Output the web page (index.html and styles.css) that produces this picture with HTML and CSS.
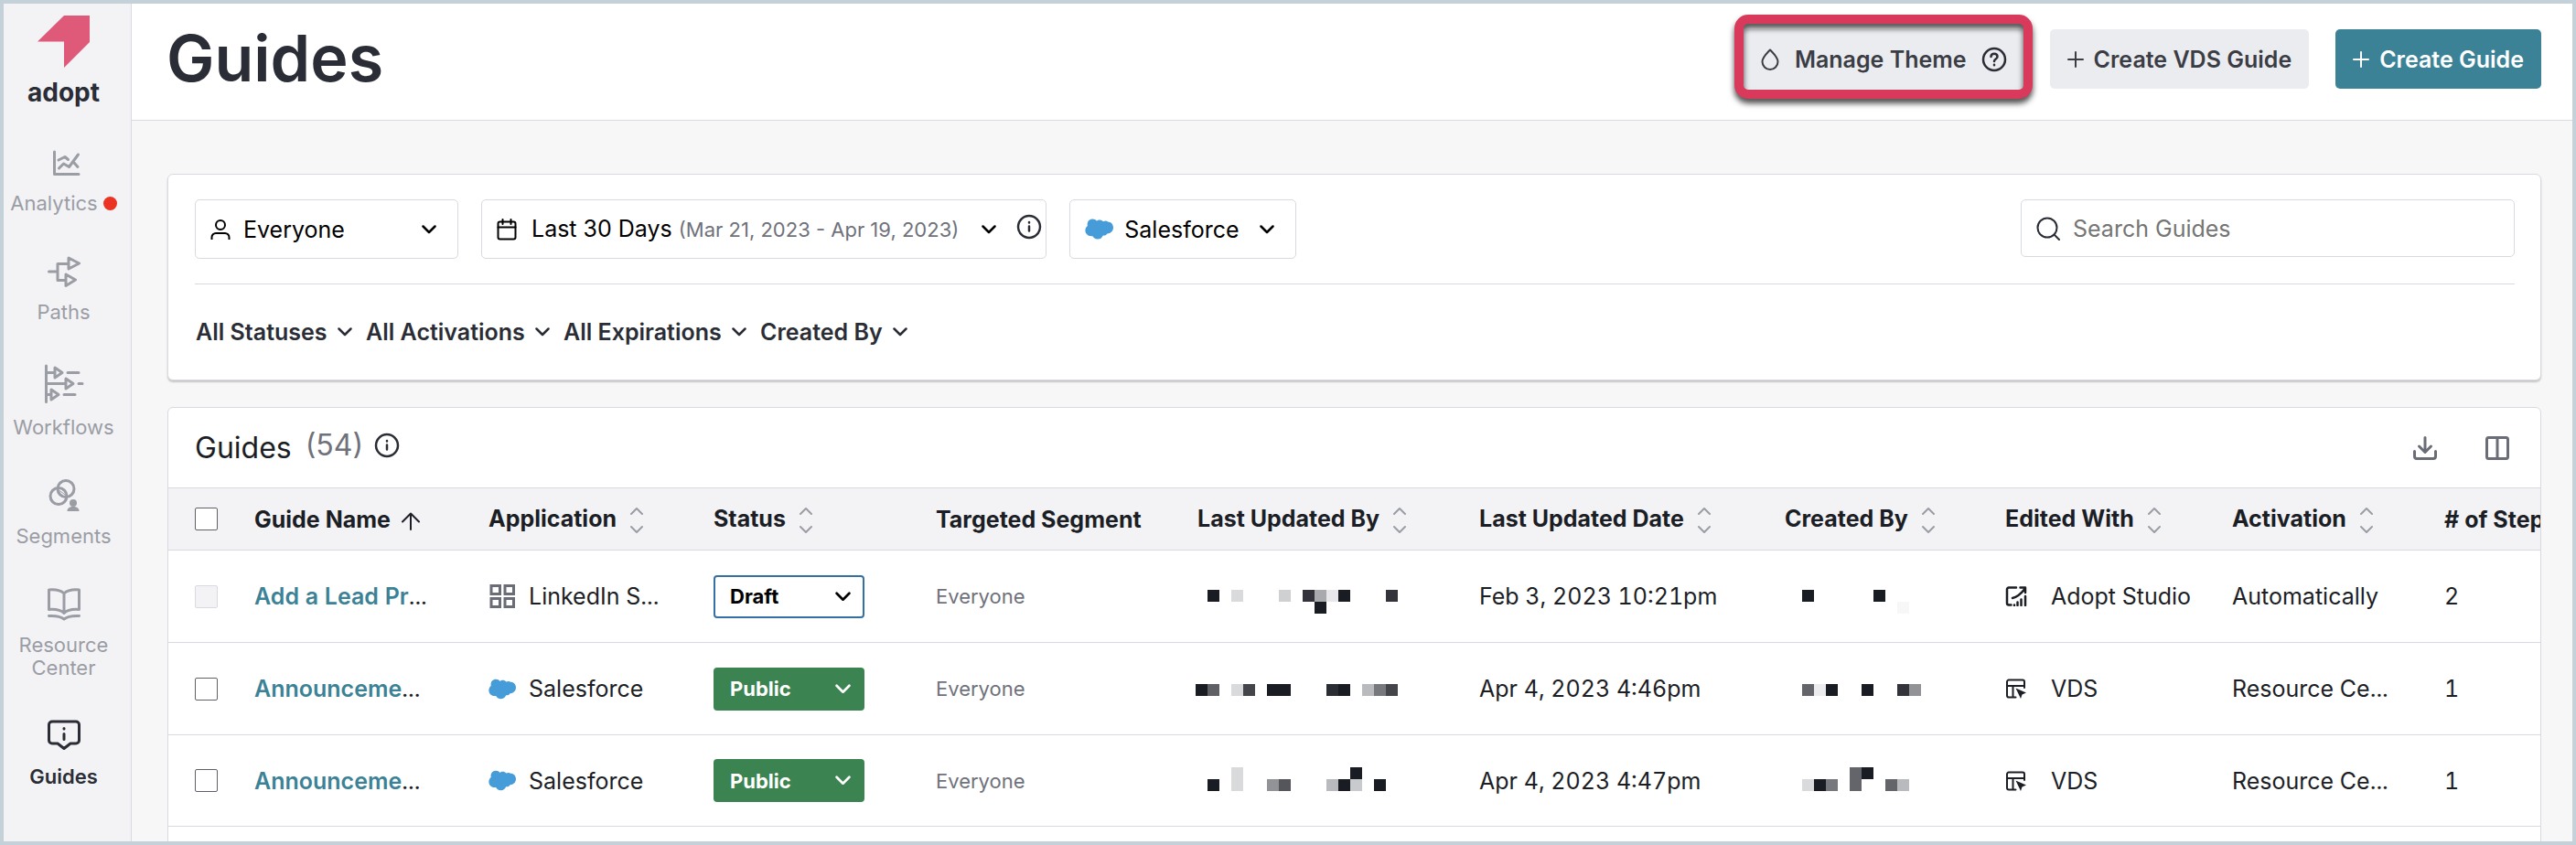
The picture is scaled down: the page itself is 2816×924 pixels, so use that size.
FILE: index.html
```html
<!DOCTYPE html>
<html lang="en">
<head>
    <meta charset="UTF-8">
    <meta name="viewport" content="width=device-width, initial-scale=1.0">
    <title>Guides</title>
    <link rel="stylesheet" href="styles.css">
</head>
<body>
    <!-- Shared icons -->
    <svg class="sprite" aria-hidden="true">
        <symbol id="chevron" viewBox="0 0 16 10"><path stroke-width="2.5" d="M1.500 1.500 8 8l6.500-6.500" /></symbol>
        <symbol id="sort" viewBox="0 0 14 30"><path d="M1 8l6-6 6 6M1 22l6 6 6-6" /></symbol>
        <symbol id="plus" viewBox="0 0 18 18"><path d="M9 1v16M1 9h16" /></symbol>
        <symbol id="info" viewBox="0 0 28 28"><g stroke-width="2.5"><circle cx="14" cy="14" r="12" /><path d="M14 13.500v5M14 9v.5" /></g></symbol>
        <symbol id="cloud" viewBox="0 0 31 23"><path d="M13 2.600C14.500 1 18 .8 20 3.200c2-1 4-.6 5 .2 3.500 0 6 2.800 6 6.400 0 4-3 6.700-6.600 6.600-.8 1.500-2.500 2.400-4.600 2-1 2.200-2.700 4.200-6 4.200-2.600 0-4.500-1.600-5.300-3.400C4.500 19.800.4 17.500.4 13c0-2.300 1-4 2.500-5C1.800 3.700 4.600.4 8.300.4c2 0 3.700.9 4.700 2.200z" /></symbol>
        <symbol id="vds" viewBox="0 0 24 22"><path d="M21 10V3.500a2 2 0 0 0-2-2H4a2 2 0 0 0-2 2v15a2 2 0 0 0 2 2h7.500M2 8h19M8.500 8v12" /><path class="solid" d="M11.500 10.500l11.500 5-4.500 2-1.500 4.500z" /></symbol>
    </svg>

    <div class="app">
        <nav class="sidebar">
            <a href="#" class="brand">
                <svg width="58" height="58" viewBox="0 0 58 58"><path d="M29 0h28v29L29 57V28.500H0z" /></svg>
                adopt
            </a>
            <a href="#" class="nav-item">
                <svg class="icon" width="36" height="36" viewBox="0 0 36 36"><path d="M7.500 6v24.500H34M12 15l7-3.500 3.500 3M12.500 24l5-5 6 3.500L33.500 9M29 18l4 4.500" /></svg>
                <span class="with-dot">Analytics<i class="dot"></i></span>
            </a>
            <a href="#" class="nav-item">
                <svg class="icon" width="36" height="36" viewBox="0 0 36 36"><path d="M1.500 18H11M22 9.500H11v18h8M23 3l11.500 6L23 15zM20 21l10.500 6L20 33.500z" /></svg>
                Paths
            </a>
            <a href="#" class="nav-item">
                <svg class="icon" width="44" height="43" viewBox="0 0 44 43"><path d="M2.500 2v39.500M2.500 9.500H11M26 9.500h12M12 4v11l8-5.500zM2.500 21.500H24M24 16v11l8-5.500zM38 21.500h4M2.500 33.500H8M8 28v11l8-5.500zM22 33.500h12" /></svg>
                Workflows
            </a>
            <a href="#" class="nav-item">
                <svg class="icon" width="36" height="36" viewBox="0 0 36 36"><circle cx="20" cy="10.500" r="9" /><circle cx="12" cy="18.500" r="9" /><path class="thin" d="M13 12.500l7 5M13 16l5 4M15 10.500l4 2" /><circle class="solid" cx="28" cy="26" r="4" /><path class="solid" d="M21.500 35c0-3.500 2.500-5 6.500-5s6.500 1.500 6.500 5z" /></svg>
                Segments
            </a>
            <a href="#" class="nav-item">
                <svg class="icon" width="36" height="36" viewBox="0 0 36 36"><path d="M18 6C14 2 8 1.500 1.500 2v21.500C8 23 14 23.500 18 27.500 22 23.500 28 23 34.500 23.500V2C28 1.500 22 2 18 6zM18 6v21M1.500 30.500c7-.5 12 0 16.500 3.500 4.500-3.500 9.500-4 16.500-3.500" /></svg>
                Resource<br>Center
            </a>
            <a href="#" class="nav-item active">
                <svg class="icon" width="36" height="36" viewBox="0 0 36 36"><path d="M5 2h26a3.500 3.500 0 0 1 3.500 3.500v17A3.500 3.500 0 0 1 31 26h-6l-7 5.500L11 26H5a3.500 3.500 0 0 1-3.500-3.500v-17A3.500 3.500 0 0 1 5 2zM18 15.500v6M18 9.500v.5" /></svg>
                Guides
            </a>
        </nav>

        <div class="page">
            <header class="page-header">
                <h1>Guides</h1>
                <div class="actions">
                    <button type="button" class="btn highlighted">
                        <svg class="icon" width="22" height="26" viewBox="0 0 22 26"><path d="M11 2.500c-4 4.500-8.500 8-8.500 13a8.500 8.500 0 0 0 17 0c0-5-4.500-8.500-8.500-13z" /></svg>
                        <span class="wide">Manage Theme</span>
                        <svg class="icon dark" width="28" height="28" viewBox="0 0 28 28"><g stroke-width="2.5"><circle cx="14" cy="14" r="12" /><path d="M10.500 11c0-4.500 7-4.500 7 0 0 2.500-3.500 2.500-3.500 5M14 19.800v.4" /></g></svg>
                    </button>
                    <button type="button" class="btn"><svg class="icon" width="18" height="18"><use href="#plus" /></svg>Create VDS Guide</button>
                    <button type="button" class="btn btn-primary"><svg class="icon" width="18" height="18"><use href="#plus" /></svg>Create Guide</button>
                </div>
            </header>

            <main>
                <section class="card filters">
                    <div class="filter-row">
                        <label class="field audience">
                            <svg class="icon" width="22" height="22" viewBox="0 0 22 22"><circle cx="11" cy="6" r="5" /><path d="M1.500 22v-2.500A4.500 4.500 0 0 1 6 15h10a4.500 4.500 0 0 1 4.500 4.500V22" /></svg>
                            <select aria-label="Audience"><option>Everyone</option></select>
                            <svg class="icon" width="16" height="10"><use href="#chevron" /></svg>
                        </label>
                        <div class="field date-range">
                            <button type="button">
                                <svg class="icon" width="22" height="24" viewBox="0 0 22 24"><rect x="1.500" y="3.500" width="19" height="19" rx="2" /><path d="M1.500 9.500h19M6.500 1v5M15.500 1v5" /></svg>
                                <span>Last 30 Days <small>(Mar 21, 2023 - Apr 19, 2023)</small></span>
                                <svg class="icon" width="16" height="10"><use href="#chevron" /></svg>
                            </button>
                            <svg class="icon info" width="28" height="28"><use href="#info" /></svg>
                        </div>
                        <label class="field application">
                            <svg class="cloud" width="31" height="23"><use href="#cloud" /></svg>
                            <select aria-label="Application"><option>Salesforce</option></select>
                            <svg class="icon" width="16" height="10"><use href="#chevron" /></svg>
                        </label>
                        <label class="field search">
                            <svg class="icon" width="26" height="26" viewBox="0 0 26 26"><circle cx="12" cy="12" r="10.500" /><path d="M19.500 19.500l5.500 5.500" /></svg>
                            <input type="search" placeholder="Search Guides" aria-label="Search Guides">
                        </label>
                    </div>
                    <div class="quick-filters">
                        <label><select aria-label="Status"><option>All Statuses</option></select><svg class="icon" width="16" height="10"><use href="#chevron" /></svg></label>
                        <label><select aria-label="Activation"><option>All Activations</option></select><svg class="icon" width="16" height="10"><use href="#chevron" /></svg></label>
                        <label><select aria-label="Expiration"><option>All Expirations</option></select><svg class="icon" width="16" height="10"><use href="#chevron" /></svg></label>
                        <label><select aria-label="Created By"><option>Created By</option></select><svg class="icon" width="16" height="10"><use href="#chevron" /></svg></label>
                    </div>
                </section>

                <section class="card list">
                    <div class="list-header">
                        <h2>Guides</h2>
                        <span class="count">(54)</span>
                        <svg class="icon info" width="28" height="28"><use href="#info" /></svg>
                        <div class="list-tools">
                            <button type="button" aria-label="Download"><svg class="icon" width="26" height="26" viewBox="0 0 26 26"><path d="M1.500 16.500V22a2.500 2.500 0 0 0 2.500 2.500h18a2.500 2.500 0 0 0 2.500-2.500v-5.500M13 1.500V17M6.500 11l6.500 6.500 6.500-6.500" /></svg></button>
                            <button type="button" aria-label="Columns"><svg class="icon" width="26" height="26" viewBox="0 0 26 26"><rect x="1.500" y="1.500" width="23" height="23" rx="2" /><path d="M13 1.500v23" /></svg></button>
                        </div>
                    </div>
                    <table>
                        <colgroup>
                            <col class="col-check"><col class="col-name"><col class="col-app"><col class="col-status"><col class="col-segment"><col class="col-updated-by"><col class="col-updated"><col class="col-created"><col class="col-edited"><col class="col-activation"><col class="col-steps">
                        </colgroup>
                        <thead>
                            <tr>
                                <th><input type="checkbox" aria-label="Select all"></th>
                                <th>Guide Name <svg class="icon arrow" width="20" height="20" viewBox="0 0 20 20"><path d="M10 19V1.500M1 10.500l9-9 9 9" /></svg></th>
                                <th>Application <svg class="icon sort" width="14" height="30"><use href="#sort" /></svg></th>
                                <th>Status <svg class="icon sort" width="14" height="30"><use href="#sort" /></svg></th>
                                <th>Targeted Segment</th>
                                <th>Last Updated By <svg class="icon sort" width="14" height="30"><use href="#sort" /></svg></th>
                                <th>Last Updated Date <svg class="icon sort" width="14" height="30"><use href="#sort" /></svg></th>
                                <th>Created By <svg class="icon sort" width="14" height="30"><use href="#sort" /></svg></th>
                                <th>Edited With <svg class="icon sort" width="14" height="30"><use href="#sort" /></svg></th>
                                <th>Activation <svg class="icon sort" width="14" height="30"><use href="#sort" /></svg></th>
                                <th># of Steps</th>
                            </tr>
                        </thead>
                        <tbody>
                            <tr>
                                <td><input type="checkbox" aria-label="Select guide" disabled></td>
                                <td><a href="#">Add a Lead Pr</a>...</td>
                                <td><div class="cell"><svg class="icon grid" width="30" height="28" viewBox="0 0 30 28"><path d="M3 2.500h9.500v9H3zM18 2.500h9.500v9H18zM3 16.500h9.500v9H3zM18 16.500h9.500v9H18z" /></svg>LinkedIn S...</div></td>
                                <td><label class="status draft"><select aria-label="Guide status"><option>Draft</option></select><svg class="icon" width="17" height="11"><use href="#chevron" /></svg></label></td>
                                <td class="segment">Everyone</td>
                                <td><svg class="mosaic" width="221" height="39" viewBox="2 0 221 39" aria-hidden="true"><g fill="#1a1c24"><path d="M13 12h13v13H13zM130 25h13v13h-13zM156 12h13v13h-13z" /></g><path fill="#d9dadc" d="M39 12h13v13H39z" /><path fill="#cfd0d2" d="M91 12h13v13H91z" /><path fill="#33343b" d="M117 12h13v13h-13zM208 12h13v13h-13z" /><path fill="#a9aaae" d="M130 12h13v13h-13z" /><path fill="#e8e8ea" d="M143 12h13v13h-13z" /></svg></td>
                                <td>Feb 3, 2023 10:21pm</td>
                                <td><svg class="mosaic" width="149" height="39" viewBox="-19 0 149 39" aria-hidden="true"><path fill="#1a1c24" d="M0 12h13v13H0zM78 12h13v13H78z" /><path fill="#f7f7f8" d="M104 25h13v13h-13z" /></svg></td>
                                <td><div class="cell editor"><svg class="icon" width="24" height="22" viewBox="0 0 24 22"><path stroke-width="2.5" d="M12 1.500H4A2 2 0 0 0 2 3.500v15a2 2 0 0 0 2 2h2.500M8 13c5-1 9-4.500 13-9.500M16.500 1.500H22V7M22 11v10M17.500 14.500V21M13.500 17.500V21M10 20.500v.5" /></svg>Adopt Studio</div></td>
                                <td>Automatically</td>
                                <td>2</td>
                            </tr>
                            <tr>
                                <td><input type="checkbox" aria-label="Select guide"></td>
                                <td><a href="#">Announceme</a>...</td>
                                <td><div class="cell"><svg class="cloud" width="30" height="23"><use href="#cloud" /></svg>Salesforce</div></td>
                                <td><label class="status"><select aria-label="Guide status"><option>Public</option></select><svg class="icon" width="17" height="11"><use href="#chevron" /></svg></label></td>
                                <td class="segment">Everyone</td>
                                <td><svg class="mosaic" width="221" height="39" viewBox="2 0 221 39" aria-hidden="true"><path fill="#1a1c24" d="M0 14h13v13H0zM78 14h26v13H78zM156 14h13v13h-13z" /><path fill="#5f6066" d="M13 14h13v13H13z" /><path fill="#d9dadc" d="M39 14h13v13H39z" /><path fill="#44454b" d="M52 14h13v13H52zM208 14h13v13h-13z" /><path fill="#2b2d34" d="M143 14h13v13h-13z" /><path fill="#b9babd" d="M182 14h13v13h-13z" /><path fill="#77787e" d="M195 14h13v13h-13z" /></svg></td>
                                <td>Apr 4, 2023 4:46pm</td>
                                <td><svg class="mosaic" width="149" height="39" viewBox="-19 0 149 39" aria-hidden="true"><path fill="#64656b" d="M0 14h13v13H0z" /><path fill="#ececee" d="M13 14h13v13H13z" /><path fill="#1a1c24" d="M26 14h13v13H26zM65 14h13v13H65z" /><path fill="#33343b" d="M104 14h13v13h-13z" /><path fill="#929397" d="M117 14h13v13h-13z" /></svg></td>
                                <td><div class="cell editor"><svg class="icon" width="24" height="22"><use href="#vds" /></svg>VDS</div></td>
                                <td>Resource Ce...</td>
                                <td>1</td>
                            </tr>
                            <tr>
                                <td><input type="checkbox" aria-label="Select guide"></td>
                                <td><a href="#">Announceme</a>...</td>
                                <td><div class="cell"><svg class="cloud" width="30" height="23"><use href="#cloud" /></svg>Salesforce</div></td>
                                <td><label class="status"><select aria-label="Guide status"><option>Public</option></select><svg class="icon" width="17" height="11"><use href="#chevron" /></svg></label></td>
                                <td class="segment">Everyone</td>
                                <td><svg class="mosaic" width="221" height="39" viewBox="2 0 221 39" aria-hidden="true"><path fill="#1a1c24" d="M13 18h13v13H13zM156 18h13v13h-13zM169 5h13v13h-13zM195 18h13v13h-13z" /><path fill="#d9dadc" d="M39 5h13v26H39z" /><path fill="#929397" d="M78 18h13v13H78z" /><path fill="#55565b" d="M91 18h13v13H91z" /><path fill="#b9babd" d="M143 18h13v13h-13z" /><path fill="#c9cacd" d="M169 18h13v13h-13z" /></svg></td>
                                <td>Apr 4, 2023 4:47pm</td>
                                <td><svg class="mosaic" width="149" height="39" viewBox="-19 0 149 39" aria-hidden="true"><path fill="#d9dadc" d="M0 18h13v13H0z" /><path fill="#1a1c24" d="M13 18h13v13H13zM65 5h13v13H65z" /><path fill="#77787e" d="M26 18h13v13H26z" /><path fill="#64656b" d="M52 5h13v26H52zM91 18h13v13H91z" /><path fill="#b9babd" d="M104 18h13v13h-13z" /></svg></td>
                                <td><div class="cell editor"><svg class="icon" width="24" height="22"><use href="#vds" /></svg>VDS</div></td>
                                <td>Resource Ce...</td>
                                <td>1</td>
                            </tr>
                        </tbody>
                    </table>
                    <div class="list-footer"></div>
                </section>
            </main>
        </div>
    </div>
</body>
</html>
```

FILE: styles.css
```css
* {
    box-sizing: border-box;
}
body {
    margin: 0;
    font-family: Inter, "Liberation Sans", sans-serif;
    font-size: 25px;
    line-height: 32px;
    color: #1c1e26;
    background: #f7f7f7;
}
button, input, select {
    font: inherit;
    color: inherit;
    margin: 0;
}
select {
    appearance: none;
    border: 0;
    padding: 0;
    background: none;
    cursor: pointer;
}
svg {
    display: block;
    flex: none;
}
.sprite {
    position: absolute;
    width: 0;
    height: 0;
}
.icon {
    fill: none;
    stroke: currentColor;
    stroke-width: 2;
    stroke-linecap: round;
    stroke-linejoin: round;
}
.icon .solid, .solid {
    fill: currentColor;
    stroke: none;
}
.icon .thin {
    stroke-width: 1;
}
.cloud {
    fill: #459cd8;
}
.app {
    display: flex;
    height: 100vh;
    border: 4px solid #c4d1d9;
    overflow: hidden;
}

/* Sidebar */
.sidebar {
    flex: none;
    width: 140px;
    padding: 13px 8px 0 0;
    background: #f3f3f6;
    border-right: 1px solid #d9dae1;
    line-height: 25px;
    font-size: 22px;
    text-align: center;
}
.sidebar a {
    display: flex;
    flex-direction: column;
    align-items: center;
    text-decoration: none;
}
.brand {
    gap: 12px;
    margin-bottom: 45px;
    color: #2a2d35;
    font-size: 28px;
    font-weight: 700;
    line-height: 28px;
}
.brand svg {
    fill: #de5a78;
}
.nav-item {
    gap: 14px;
    margin-bottom: 44px;
    color: #9b9da5;
}
.nav-item .icon {
    stroke-width: 3;
}
.nav-item.active {
    color: #2a2d35;
    font-weight: 600;
}
.with-dot {
    display: flex;
    align-items: center;
    gap: 6px;
}
.dot {
    width: 15px;
    height: 15px;
    border-radius: 50%;
    background: #eb3323;
}

/* Header */
.page {
    flex: 1;
    min-width: 0;
}
.page-header {
    display: flex;
    justify-content: space-between;
    align-items: flex-start;
    height: 128px;
    padding: 28px 34px 0 38px;
    background: #fff;
    border-bottom: 1px solid #d9dae1;
}
h1 {
    margin: 0;
    color: #2a2d35;
    font-size: 70px;
    font-weight: 600;
    line-height: 64px;
}
.actions {
    display: flex;
    gap: 29px;
}
.btn {
    position: relative;
    display: flex;
    align-items: center;
    gap: 11px;
    height: 65px;
    padding: 0 19px;
    border: 0;
    border-radius: 5px;
    background: #ebecf0;
    color: #3b3d45;
    font-weight: 600;
    cursor: pointer;
}
.btn-primary {
    background: #3c8296;
    color: #fff;
}
.btn .dark {
    color: #2a2d35;
}
.btn .wide {
    padding: 0 5px;
}
.highlighted {
    padding: 0 18px;
}
.highlighted::after {
    content: "";
    position: absolute;
    inset: -16px -10px -11px;
    border: 10px solid #d93a5b;
    border-radius: 15px;
    filter: drop-shadow(0 5px 3px rgba(0, 0, 0, 0.7));
}

/* Cards */
main {
    padding: 58px 34px 0 39px;
}
.card {
    background: #fff;
    border: 1px solid #d9dae1;
    border-radius: 6px;
}
.filters {
    margin-bottom: 29px;
    padding: 27px 28px 0 29px;
    box-shadow: 0 2px 2px rgba(0, 0, 0, 0.2);
}
.filter-row {
    display: flex;
    align-items: flex-start;
    gap: 25px;
    padding-bottom: 27px;
    border-bottom: 1px solid #d9dae1;
}
.field {
    display: flex;
    align-items: center;
    gap: 14px;
    height: 65px;
    padding: 0 16px;
    border: 1px solid #d9dae1;
    border-radius: 5px;
    color: #000;
}
.field select {
    flex: 1;
}
.audience {
    width: 288px;
    padding-right: 23px;
}
.date-range {
    gap: 22px;
    padding-right: 4px;
}
.date-range button {
    display: flex;
    align-items: center;
    gap: 16px;
    padding: 0;
    border: 0;
    background: none;
    cursor: pointer;
}
.date-range span {
    margin-right: 9px;
}
.date-range small {
    color: #6f717b;
    font-size: 22px;
}
.info {
    margin-bottom: 5px;
    color: #2a2d35;
}
.application {
    width: 248px;
    gap: 12px;
    padding-right: 23px;
}
.search {
    width: 540px;
    height: 63px;
    margin-left: auto;
    color: #2a2d35;
}
.search input {
    flex: 1;
    min-width: 0;
    padding: 0;
    border: 0;
    outline: 0;
    background: none;
}
.search input::placeholder {
    color: #757575;
}
.quick-filters {
    display: flex;
    gap: 15px;
    padding: 36px 1px;
    color: #2a2d35;
    font-weight: 600;
}
.quick-filters label {
    display: flex;
    align-items: center;
    gap: 11px;
}

/* Guides table */
.list {
    overflow: hidden;
}
.list-header {
    display: flex;
    align-items: center;
    height: 87px;
    padding: 0 34px 0 29px;
}
h2 {
    margin: 0;
    font-size: 32px;
    font-weight: 400;
}
.count {
    margin: 0 12px 5px 15px;
    color: #6f717b;
    font-size: 32px;
}
.list-tools {
    display: flex;
    gap: 53px;
    margin-left: auto;
}
.list-tools button {
    padding: 0;
    border: 0;
    background: none;
    color: #6a6d76;
    cursor: pointer;
}
.list-tools .icon {
    stroke-width: 3;
}
.list-footer {
    height: 60px;
}
table {
    width: 2700px;
    table-layout: fixed;
    border-collapse: collapse;
}
th, td {
    padding: 0;
    text-align: left;
    white-space: nowrap;
    border-top: 1px solid #d9dae1;
}
th {
    height: 68px;
    background: #f3f3f6;
    font-weight: 700;
}
td {
    height: 101px;
    font-variant-numeric: tabular-nums;
}
tbody tr:last-child td {
    height: 100px;
    border-bottom: 1px solid #d9dae1;
}
th:first-child, td:first-child {
    padding-left: 29px;
}
th .icon {
    display: inline-block;
    vertical-align: middle;
}
.sort {
    margin-left: 9px;
    color: #9b9da5;
}
.arrow {
    margin-left: 6px;
}
.col-check { width: 94px; }
.col-name { width: 256px; }
.col-app { width: 246px; }
.col-status { width: 243px; }
.col-segment { width: 286px; }
.col-updated-by { width: 308px; }
.col-updated { width: 334px; }
.col-created { width: 241px; }
.col-edited { width: 248px; }
.col-activation { width: 232px; }
input[type="checkbox"] {
    appearance: none;
    display: block;
    width: 25px;
    height: 25px;
    border: 1px solid #5f616a;
    border-radius: 2px;
    background: #fff;
}
input[type="checkbox"]:disabled {
    border-color: #d9dae1;
    background: #f3f3f6;
}
td a {
    color: #3c8296;
    font-weight: 600;
    text-decoration: none;
}
.mosaic {
    overflow: visible;
}
.cell {
    display: flex;
    align-items: center;
    gap: 14px;
}
.cell.editor {
    gap: 26px;
}
.grid {
    color: #6a6d76;
    stroke-width: 3;
    stroke-linejoin: miter;
}
.status {
    display: flex;
    align-items: center;
    width: 165px;
    height: 47px;
    padding: 0 15px 0 18px;
    border-radius: 4px;
    background: #3b8350;
    color: #fff;
    font-size: 22px;
    font-weight: 700;
}
.status select {
    flex: 1;
    min-width: 0;
}
.status .icon {
    stroke-width: 3;
}
.status.draft {
    padding: 0 13px 0 16px;
    border: 2px solid #3470a2;
    background: #fff;
    color: #000;
}
.segment {
    color: #6f717b;
    font-size: 22px;
}
```
